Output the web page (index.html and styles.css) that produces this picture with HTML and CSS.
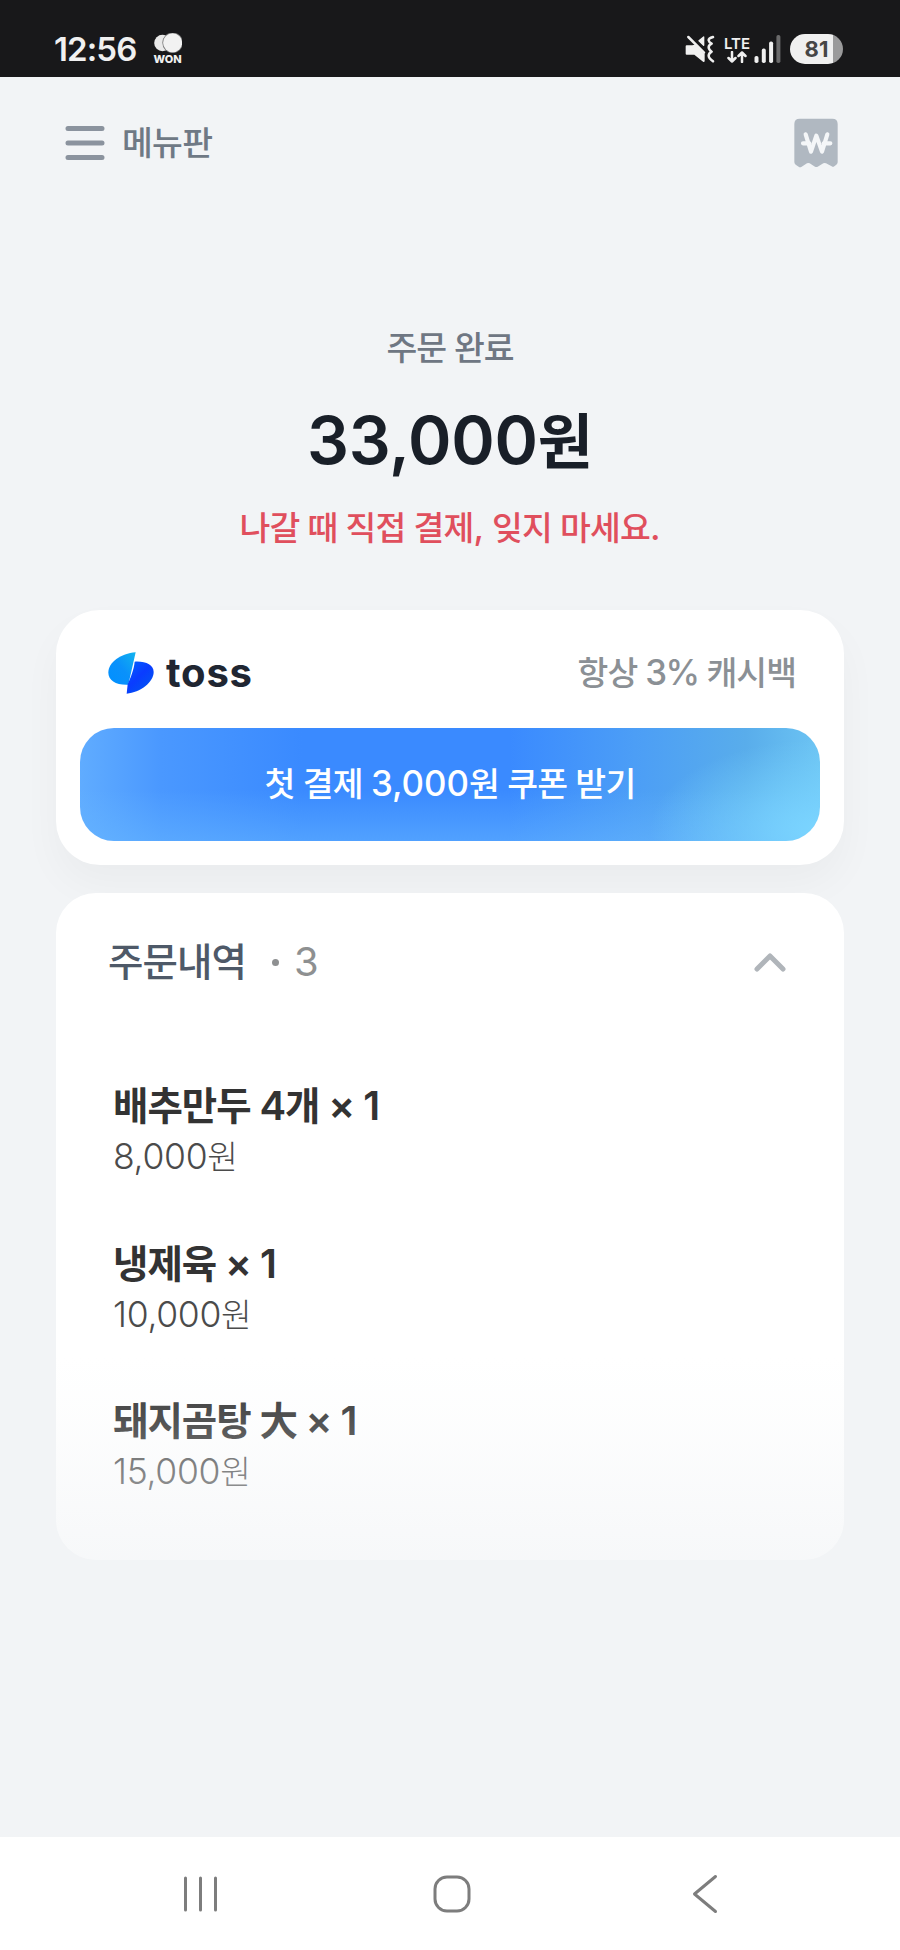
FILE: index.html
```html
<!DOCTYPE html>
<html lang="ko">
<head>
<meta charset="utf-8">
<title>주문 완료</title>
<link rel="stylesheet" href="styles.css">
</head>
<body>
<div class="screen">
  <header class="status">
    <div class="status-left">
      <span class="clock">12:56</span>
      <span class="won">
        <svg width="28" height="20" viewBox="0 0 28 20"><circle cx="8.5" cy="10" r="8.3" fill="#e9e9e9"/><circle cx="18.6" cy="9.8" r="10.3" fill="#777"/><circle cx="18.6" cy="9.8" r="9.5" fill="#f2f2f2"/></svg>
        <span class="won-label">WON</span>
      </span>
    </div>
    <div class="status-right">
      <svg class="mute" width="30" height="28" viewBox="129 105 90 84" fill="#f0f0f0" stroke="#f0f0f0" stroke-linejoin="round" stroke-linecap="round">
        <path d="M134 139h17l8-2 26 26v20l-27-22h-24z" stroke-width="6"/>
        <path d="M139 111l47 47" fill="none" stroke-width="7.500"/>
        <path d="M171 122l14-11v25z" stroke-width="4"/>
        <path d="M213 111q-14 4-13 10t9 10q-9 4-9 11t9 13q-9 5-9 12t13 17" fill="none" stroke-width="7.500"/>
      </svg>
      <div class="lte">
        <span class="lte-label">LTE</span>
        <svg width="20" height="12" viewBox="0 0 20 12" fill="none" stroke="#f0f0f0" stroke-width="2.5" stroke-linecap="round" stroke-linejoin="round"><path d="M5 1v9.500M1.500 7L5 10.500 8.500 7M15 11V1.500M11.500 5L15 1.500 18.500 5"/></svg>
      </div>
      <svg class="signal" width="27" height="28" viewBox="0 0 27 28"><rect x=".5" y="21" width="4" height="7" rx="1.800" fill="#f0f0f0"/><rect x="7.800" y="13.600" width="4" height="14.400" rx="1.800" fill="#f0f0f0"/><rect x="15.100" y="6.500" width="4" height="21.500" rx="1.800" fill="#f0f0f0"/><rect x="22.400" y="0" width="4" height="28" rx="1.800" fill="#6a6a6b"/></svg>
      <span class="battery">81</span>
    </div>
  </header>

  <main class="content">
    <nav class="topbar">
      <div class="menu">
        <svg width="40" height="36" viewBox="0 0 40 36" fill="none" stroke="#8b939e" stroke-width="5" stroke-linecap="round"><path d="M3 3.500h34M3 18h34M3 32.500h34"/></svg>
        <span class="menu-label">메뉴판</span>
      </div>
      <svg class="receipt" width="44" height="50" viewBox="461 355 132 150">
        <path d="M478 357h98q16 0 16 16v115q0 4-4 7l-6 5q-4 3-8 0l-17-9q-4-2-8 0l-17 10q-4 2-8 0l-16-10q-4-2-8 0l-16 10q-5 3-9 0l-9-6q-4-3-4-8V373q0-16 16-16z" fill="#b0b8c1"/>
        <path d="M496 404l16 52 16-48 17 48 16-52M488 431h19M550 431h20" fill="none" stroke="#f4f6f8" stroke-width="12.500" stroke-linecap="round" stroke-linejoin="round"/>
      </svg>
    </nav>

    <section class="summary">
      <p class="done">주문 완료</p>
      <h1 class="total"><span class="n">33,000</span>원</h1>
      <p class="notice">나갈 때 직접 결제<span class="n">,</span> 잊지 마세요<span class="n">.</span></p>
    </section>

    <section class="card pay">
      <div class="pay-head">
        <div class="brand">
          <svg width="46" height="42" viewBox="203 187 138 126">
            <defs>
              <linearGradient id="wingA" x1="0" y1="1" x2="1" y2="0"><stop offset="0" stop-color="#0090ff"/><stop offset=".5" stop-color="#0a91fb"/><stop offset="1" stop-color="#12b4ee"/></linearGradient>
              <linearGradient id="wingB" x1="0" y1="0" x2=".8" y2="1"><stop offset="0" stop-color="#0064ff"/><stop offset=".5" stop-color="#0a3cff"/><stop offset="1" stop-color="#0058f0"/></linearGradient>
            </defs>
            <path d="M286 188L264 285C228 287 204 272 204 249C204 218 241 192 286 188Z" fill="url(#wingA)"/>
            <path d="M283 216C316 214 340 226 340 247C340 278 300 308 259 312L262 284C270 266 281 240 283 216Z" fill="url(#wingB)"/>
          </svg>
          <span class="brand-name">toss</span>
        </div>
        <span class="cashback">항상 <span class="n">3%</span> 캐시백</span>
      </div>
      <button class="coupon">첫 결제 <span class="n">3,000</span>원 쿠폰 받기</button>
    </section>

    <section class="card orders">
      <div class="orders-head">
        <h2 class="orders-title">주문내역</h2>
        <span class="orders-dot"></span>
        <span class="orders-count">3</span>
        <svg class="chevron" width="32" height="20" viewBox="0 0 32 20" fill="none" stroke="#b0b5ba" stroke-width="5" stroke-linecap="round" stroke-linejoin="round"><path d="M3 17L16 4l13 13"/></svg>
      </div>
      <ul class="items">
        <li class="item"><span class="name">배추만두 <span class="n">4</span>개 <span class="n">× 1</span></span><span class="price"><span class="n">8,000</span>원</span></li>
        <li class="item"><span class="name">냉제육 <span class="n">× 1</span></span><span class="price"><span class="n">10,000</span>원</span></li>
        <li class="item"><span class="name">돼지곰탕 大 <span class="n">× 1</span></span><span class="price"><span class="n">15,000</span>원</span></li>
      </ul>
    </section>
    <div class="fade"></div>
  </main>

  <footer class="navbar">
    <svg width="36" height="38" viewBox="0 0 36 38" stroke="#7d7d7d" stroke-width="3" stroke-linecap="round"><path d="M2.500 3v32M17.500 3v32M32.500 3v32"/></svg>
    <svg class="home" width="38" height="38" viewBox="0 0 38 38" fill="none" stroke="#7d7d7d" stroke-width="3"><rect x="2" y="2" width="34" height="34" rx="12"/></svg>
    <svg width="26" height="40" viewBox="0 0 26 40" fill="none" stroke="#7d7d7d" stroke-width="3" stroke-linecap="round" stroke-linejoin="round"><path d="M23.500 2.500L2.500 20l21 17.500"/></svg>
  </footer>
</div>
</body>
</html>
```
FILE: styles.css
```css
* { box-sizing: border-box; }
body {
  margin: 0;
  font-family: Inter, "Noto Sans CJK KR", sans-serif;
  background: #f2f4f6;
}
h1, h2, p, ul { margin: 0; padding: 0; }
ul { list-style: none; }
svg { display: block; flex: none; }

/* Hangul is set slightly smaller than the Latin figures beside it */
.n { font-size: 1.04em; letter-spacing: 0; line-height: 1; }

.screen { width: 900px; height: 1950px; display: flex; flex-direction: column; overflow: hidden; }

.status {
  height: 77px;
  flex: none;
  padding: 21px 57px 0 54px;
  background: #18181a;
  color: #f0f0f0;
  display: flex;
  justify-content: space-between;
  align-items: center;
}
.status-left, .status-right { display: flex; align-items: center; }
.clock { font-size: 33px; font-weight: 600; line-height: 40px; letter-spacing: -0.9px; }
.won { display: flex; flex-direction: column; align-items: center; margin-left: 17px; }
.won-label { font-size: 11px; font-weight: 800; line-height: 12px; }
.lte { display: flex; flex-direction: column; align-items: center; margin-left: 9px; }
.lte-label { font-size: 15px; font-weight: 600; line-height: 15px; }
.signal { margin-left: 4px; }
.battery {
  width: 53px;
  height: 30px;
  margin-left: 9px;
  border-radius: 15px;
  background: linear-gradient(90deg, #f0f0f0 43px, #9a9a9b 43px);
  color: #464646;
  font-size: 22px;
  font-weight: 700;
  line-height: 31px;
  text-align: center;
}

.content { position: relative; flex: 1; min-height: 0; padding: 0 56px; background: #f2f4f6; }
.topbar { height: 132px; padding: 0 6px 0 9px; display: flex; justify-content: space-between; align-items: center; }
.menu { display: flex; align-items: center; gap: 17px; }
.menu-label { font-size: 33.500px; font-weight: 500; line-height: 44px; letter-spacing: -0.75px; color: #6f7985; }

.summary { padding-top: 117px; text-align: center; }
.done { font-size: 33.500px; font-weight: 500; line-height: 44px; letter-spacing: -1px; color: #6f7783; }
.total { margin-top: 30px; font-size: 60px; font-weight: 600; line-height: 84px; color: #191f28; }
.total .n { font-size: 66px; letter-spacing: -0.3px; }
.notice { margin-top: 22px; font-size: 33.500px; font-weight: 500; line-height: 44px; letter-spacing: -0.85px; color: #e04f5d; }

.card { background: #fff; }
.pay {
  height: 255px;
  margin-top: 60px;
  padding: 32px 24px 24px;
  border-radius: 44px;
  box-shadow: 0 20px 40px rgba(0, 0, 0, 0.035);
}
.pay-head { height: 62px; padding: 0 24px 0 28px; display: flex; justify-content: space-between; align-items: center; }
.brand { display: flex; align-items: center; gap: 12px; }
.brand-name { font-size: 40px; font-weight: 700; line-height: 44px; letter-spacing: 0.8px; color: #202632; }
.cashback { font-size: 33.500px; font-weight: 500; line-height: 44px; letter-spacing: -1px; color: #8b9095; }
.cashback .n { letter-spacing: -1.5px; }
.coupon {
  display: block;
  width: 100%;
  height: 113px;
  margin-top: 24px;
  padding: 0;
  border: 0;
  border-radius: 34px;
  background:
    radial-gradient(ellipse 170px 90px at 100% 90%, #7bd5ff 0%, rgba(116, 206, 253, 0) 100%),
    linear-gradient(0deg, rgba(104, 184, 255, 0.5) 0%, rgba(104, 184, 255, 0) 45%),
    linear-gradient(90deg, #60acff 0%, #4a98ff 11%, #3a8aff 30%, #3a8aff 58%, #4c9ef6 75%, #59adeb 90%, #6cc4f3 100%);
  color: #fff;
  font: 500 33.500px/113px Inter, "Noto Sans CJK KR", sans-serif;
  letter-spacing: -0.8px;
}

.orders { height: 667px; margin-top: 28px; padding: 44px 58px 0 52px; border-radius: 40px; }
.orders-head { height: 50px; display: flex; align-items: center; }
.orders-title { font-size: 38.500px; font-weight: 500; line-height: 50px; letter-spacing: -0.9px; color: #4e5968; }
.orders-dot { width: 7px; height: 7px; margin-left: 26px; border-radius: 50%; background: #8e9091; }
.orders-count { margin-left: 15px; font-size: 40px; line-height: 50px; color: #8e9091; }
.chevron { margin-left: auto; }
.items { display: flex; flex-direction: column; gap: 57.500px; padding: 94px 0 0 5px; }
.item { display: flex; flex-direction: column; }
.name { font-size: 38.500px; font-weight: 600; line-height: 50px; letter-spacing: -1px; color: #333; }
.name .n { letter-spacing: -1px; }
.price { padding-top: 1px; margin-bottom: -1px; font-size: 33.500px; font-weight: 300; line-height: 50px; color: #4b4b4b; }
.price .n { font-size: 35.500px; letter-spacing: -0.3px; }

/* Soft veil over the end of the order list */
.fade {
  position: absolute;
  left: 0;
  right: 0;
  bottom: 0;
  height: 480px;
  pointer-events: none;
  background: linear-gradient(180deg, rgba(242, 244, 246, 0) 0%, rgba(242, 244, 246, 0.14) 12%, rgba(242, 244, 246, 0.62) 41%, #f2f4f6 58%);
}

.navbar { height: 113px; flex: none; padding: 0 182px 0 183px; background: #fff; display: flex; justify-content: space-between; align-items: center; }
.home { margin-left: -7px; }
```
